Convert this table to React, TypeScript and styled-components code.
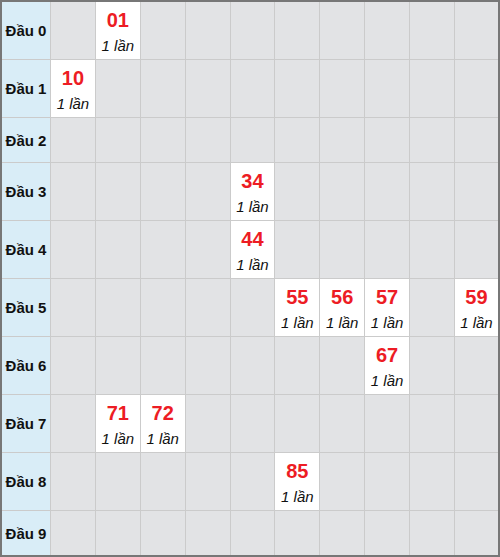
import React from "react";
import styled, { createGlobalStyle } from "styled-components";

const GlobalStyle = createGlobalStyle`
  html, body { margin: 0; padding: 0; background: #ffffff; }
  body { font-family: "Liberation Sans", Arial, sans-serif; }
`;

const Board = styled.div`
  box-sizing: border-box;
  width: 500px;
  border: 2px solid #777777;
  background: #cbcbcb;
  display: grid;
  grid-template-columns: 48px repeat(9, 43.89px) 1fr;
  gap: 1px;
`;

const HeadCell = styled.div<{ $tall: boolean }>`
  height: ${(p) => (p.$tall ? 57 : 44)}px;
  background: #d9edf7;
  display: flex;
  align-items: center;
  justify-content: center;
  font-weight: bold;
  font-size: 15px;
  color: #111111;
`;

const Cell = styled.div<{ $tall: boolean; $hit: boolean }>`
  height: ${(p) => (p.$tall ? 57 : 44)}px;
  background: ${(p) => (p.$hit ? "#ffffff" : "#e2e3e5")};
  display: flex;
  flex-direction: column;
  align-items: center;
  justify-content: flex-start;
`;

const Num = styled.span`
  margin-top: 6px;
  font-size: 20px;
  font-weight: bold;
  line-height: 24px;
  color: #ed1c24;
`;

const Count = styled.span`
  margin-top: 5px;
  font-size: 15px;
  font-style: italic;
  line-height: 18px;
  color: #111111;
`;

const hits: Record<number, number[]> = {
  0: [1],
  1: [0],
  3: [4],
  4: [4],
  5: [5, 6, 7, 9],
  6: [7],
  7: [1, 2],
  8: [5],
};

export default function App() {
  const rows = Array.from({ length: 10 }, (_, r) => r);
  const cols = Array.from({ length: 10 }, (_, c) => c);
  return (
    <>
      <GlobalStyle />
      <Board>
        {rows.map((r) => {
          const list = hits[r] || [];
          const tall = list.length > 0;
          return (
            <React.Fragment key={r}>
              <HeadCell $tall={tall}>Đầu {r}</HeadCell>
              {cols.map((c) => {
                const hit = list.includes(c);
                return (
                  <Cell key={c} $tall={tall} $hit={hit}>
                    {hit && (
                      <>
                        <Num>{`${r}${c}`}</Num>
                        <Count>1 lần</Count>
                      </>
                    )}
                  </Cell>
                );
              })}
            </React.Fragment>
          );
        })}
      </Board>
    </>
  );
}
